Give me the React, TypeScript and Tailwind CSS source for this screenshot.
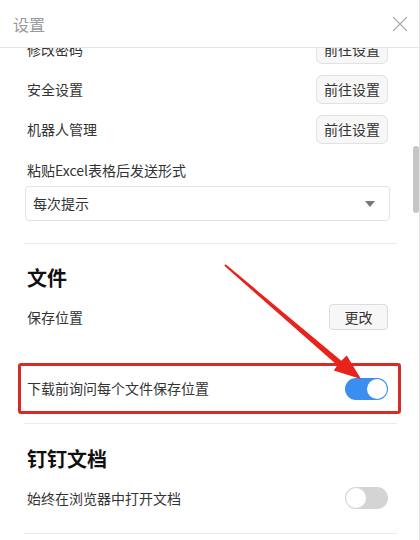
import { X } from 'lucide-react'

function GoButton({ label }: { label: string }) {
    return (
        <button className="h-[29px] w-[72px] rounded-md border border-[#e2e2e2] bg-[#f7f7f7] text-[14px] text-[#333]">
            {label}
        </button>
    )
}

function Row({ label, children }: { label: string; children?: React.ReactNode }) {
    return (
        <div className="flex h-10 items-center justify-between pl-[27px] pr-[31px]">
            <span className="text-[14px] text-[#333]">{label}</span>
            {children}
        </div>
    )
}

function Toggle({ on }: { on: boolean }) {
    return (
        <div
            className={
                on
                    ? 'flex h-[22px] w-[43px] items-center justify-end rounded-full bg-[#3a8ef0] p-[1px]'
                    : 'flex h-[22px] w-[43px] items-center justify-start rounded-full bg-[#d4d4d4] p-[1px]'
            }
        >
            <div className="h-5 w-5 rounded-full bg-white" />
        </div>
    )
}

function Divider() {
    return <div className="ml-[24px] mr-[22px] h-px bg-[#ebebeb]" />
}

export default function App() {
    return (
        <div
            className="relative h-[540px] w-[420px] overflow-hidden border-r border-[#e0e0e0] bg-white"
            style={{ fontFamily: '"Noto Sans CJK SC", "Noto Sans", sans-serif' }}
        >
            {/* Header */}
            <div className="relative z-10 flex h-12 items-center justify-between border-b border-[#e6e6e6] bg-white pl-[13px] pr-[6px]">
                <span className="text-[16px] text-[#999]">设置</span>
                <X className="h-[26px] w-[26px] text-[#aaa]" strokeWidth={1.1} />
            </div>

            {/* Scrolled content */}
            <div className="h-[492px] overflow-hidden">
                <div className="-mt-[19px]">
                    <Row label="修改密码">
                        <GoButton label="前往设置" />
                    </Row>
                    <Row label="安全设置">
                        <GoButton label="前往设置" />
                    </Row>
                    <Row label="机器人管理">
                        <GoButton label="前往设置" />
                    </Row>

                    <div className="mt-[11px] pl-[27px] text-[14px] leading-5 text-[#333]">粘贴Excel表格后发送形式</div>
                    <div className="mb-[22px] ml-[25px] mr-[29px] mt-[6px] flex h-[35px] items-center justify-between rounded-sm border border-[#e2e2e2] pl-[7px] pr-[14px]">
                        <span className="text-[14px] text-[#333]">每次提示</span>
                        <div className="h-0 w-0 border-x-[5px] border-t-[6px] border-x-transparent border-t-[#777]" />
                    </div>
                    <Divider />

                    <div className="mt-[20px] h-7 pl-[27px] text-[20px] font-bold leading-7 text-[#111]">文件</div>
                    <div className="mt-[5px]">
                        <Row label="保存位置">
                            <button className="h-[26px] w-[59px] rounded-sm border border-[#dcdcdc] bg-[#f7f7f7] text-[14px] text-[#333]">
                                更改
                            </button>
                        </Row>
                    </div>

                    <div className="ml-[18px] mr-[18px] mt-[26px] flex h-[51px] items-center justify-between rounded-[3px] border-[3px] border-[#d62b28] pl-[6px] pr-[10px]">
                        <span className="text-[14px] text-[#333]">下载前询问每个文件保存位置</span>
                        <Toggle on />
                    </div>

                    <div className="mt-[9px]">
                        <Divider />
                    </div>

                    <div className="mt-[21px] h-7 pl-[27px] text-[20px] font-bold leading-7 text-[#111]">钉钉文档</div>
                    <div className="mt-[5px]">
                        <Row label="始终在浏览器中打开文档">
                            <Toggle on={false} />
                        </Row>
                    </div>
                    <div className="mt-[15px]">
                        <Divider />
                    </div>
                </div>
            </div>

            {/* Scrollbar thumb */}
            <div className="absolute left-[413px] top-[146px] h-[67px] w-[6px] rounded-full bg-[#c6c6c6]" />

            {/* Annotation arrow */}
            <svg className="pointer-events-none absolute left-0 top-0" width="420" height="540">
                <polygon
                    points="225.65,264.24 341.3,360.7 346.8,355.4 361,379 333.8,370.6 337.3,365.3 224.35,265.76"
                    fill="#e8231c"
                />
            </svg>
        </div>
    )
}
